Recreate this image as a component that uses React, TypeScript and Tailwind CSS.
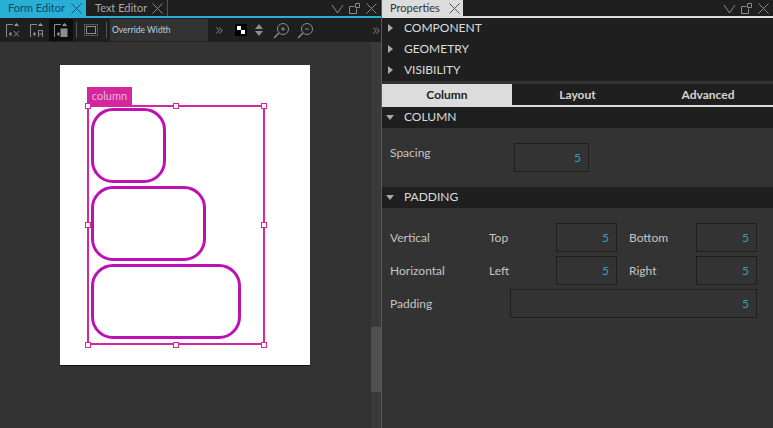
import type { ReactNode } from "react";

function WinButtons() {
  return (
    <svg width="50" height="14" viewBox="0 0 50 14" fill="none" stroke="#8a8a8a" strokeWidth="1">
      <path d="M2 4l5.500 8 5.500-8" />
      <path d="M24.500 5.500h-5v7h7v-5M25.500 2.500h4v4h-4z" />
      <path d="M36.500 2.500l10 10M46.500 2.500l-10 10" />
    </svg>
  );
}

function CloseX({ color = "#8a8a8a" }: { color?: string }) {
  return (
    <svg width="11" height="11" viewBox="0 0 11 11" fill="none" stroke={color} strokeWidth="1">
      <path d="M0.500 0.500l10 10M10.500 0.500l-10 10" />
    </svg>
  );
}

function Handle({ className }: { className: string }) {
  return <div className={`absolute h-[6px] w-[6px] border border-[#d6269e] bg-white ${className}`} />;
}

function Box({ className }: { className: string }) {
  return <div className={`h-[75px] rounded-[22px] border-[3px] border-[#bd10b5] bg-white ${className}`} />;
}

function Section({ title, open }: { title: string; open?: boolean }) {
  return (
    <div className="flex h-[21px] items-center bg-[#1f1f1f] pb-[1px]">
      {open ? (
        <svg width="8" height="5" viewBox="0 0 8 5" className="ml-[4px]">
          <path d="M0 0h8L4 5z" fill="#aaa" />
        </svg>
      ) : (
        <svg width="5" height="8" viewBox="0 0 5 8" className="ml-[6px]">
          <path d="M0 0l5 4-5 4z" fill="#aaa" />
        </svg>
      )}
      <span className={`text-[12px] text-[#dcdcdc] ${open ? "ml-[10px]" : "ml-[11px]"}`}>{title}</span>
    </div>
  );
}

function Value({ className, children }: { className: string; children: ReactNode }) {
  return (
    <div
      className={`flex h-[29px] shrink-0 items-center justify-end border border-[#1e1e1e] pr-[7px] text-[12px] text-[#2aa3bd] ${className}`}
    >
      {children}
    </div>
  );
}

function ToolIcon({ variant, active }: { variant: "x" | "a" | "box"; active?: boolean }) {
  return (
    <div className={`flex h-[22px] w-[24px] items-center justify-center ${active ? "bg-[#0d0d0d]" : ""}`}>
      <svg width="14" height="14" viewBox="0 0 14 14" fill="none" stroke="#8c8c8c">
        <path d="M0.500 14V1.500H7" />
        <path d="M8.500 2.500l2-2 2 2z" fill="#8c8c8c" />
        <path d="M5 9.500l-2 1.500 2 1.500z" fill="#8c8c8c" />
        {variant === "x" && <path d="M8 8l5 5.500M13 8l-5 5.500" />}
        {variant === "a" && <path d="M8.500 14V7.500h4V14M8.500 11h4" />}
        {variant === "box" && <rect x="7" y="6" width="6" height="8" fill="#8c8c8c" />}
      </svg>
    </div>
  );
}

export default function App() {
  return (
    <div className="flex h-[428px] w-[773px] overflow-hidden bg-[#333333] text-[12px] [font-family:Lato,sans-serif]">
      {/* Form editor side */}
      <div className="flex w-[381px] shrink-0 flex-col">
        <div className="flex h-[16px] bg-[#1f1f1f]">
          <div className="flex w-[86px] items-center justify-between bg-[#29aed6] pl-[8px] pr-[4px] text-[11px] text-[#0f4a66]">
            <span>Form Editor</span>
            <CloseX color="#15506b" />
          </div>
          <div className="ml-[1px] flex w-[81px] items-center justify-between border-r border-[#555] pl-[8px] pr-[4px] text-[11px] text-[#a8a8a8]">
            <span>Text Editor</span>
            <CloseX />
          </div>
          <div className="ml-auto mr-px flex items-center">
            <WinButtons />
          </div>
        </div>
        <div className="h-[2px] bg-[#29aed6]" />
        <div className="flex h-[24px] items-center bg-[#1f1f1f] pl-[1px]">
          <ToolIcon variant="x" />
          <ToolIcon variant="a" />
          <ToolIcon variant="box" active />
          <div className="ml-[3px] h-[16px] w-px bg-[#555]" />
          <svg width="14" height="12" viewBox="0 0 14 12" fill="none" stroke="#8c8c8c" className="ml-[7px]">
            <rect x="2.500" y="2.500" width="9" height="7" />
            <rect x="0.500" y="0.500" width="13" height="11" strokeDasharray="1 1" />
          </svg>
          <div className="ml-[8px] h-[16px] w-px bg-[#555]" />
          <div className="ml-[3px] flex h-[22px] w-[98px] items-center bg-[#333333] pl-[2px] text-[8.5px] text-[#b9d2e2]">
            Override Width
          </div>
          <svg width="7" height="7" viewBox="0 0 7 7" fill="none" stroke="#8c8c8c" className="ml-[8px]">
            <path d="M0.500 0.500l2.500 3-2.500 3M3.500 0.500l2.500 3-2.500 3" />
          </svg>
          <svg width="12" height="12" viewBox="0 0 12 12" className="ml-[12px]">
            <rect width="12" height="12" fill="#000" />
            <path d="M2 2h4v4H2zM6 6h4v4H6z" fill="#fff" />
          </svg>
          <svg width="8" height="12" viewBox="0 0 8 12" className="ml-[8px]">
            <path d="M4 0l4 5H0zM0 7h8l-4 5z" fill="#8c8c8c" />
          </svg>
          <svg width="17" height="17" viewBox="0 0 17 17" fill="none" stroke="#8c8c8c" className="ml-[10px]">
            <circle cx="10" cy="7" r="5.500" />
            <path d="M6 11l-5 5" strokeWidth="1.500" />
            <path d="M8 7h4M10 5v4" />
          </svg>
          <svg width="17" height="17" viewBox="0 0 17 17" fill="none" stroke="#8c8c8c" className="ml-[7px]">
            <circle cx="10" cy="7" r="5.500" />
            <path d="M6 11l-5 5" strokeWidth="1.500" />
            <path d="M8 7h4" />
          </svg>
          <svg width="7" height="7" viewBox="0 0 7 7" fill="none" stroke="#8c8c8c" className="ml-auto mr-[1px]">
            <path d="M0.500 0.500l2.500 3-2.500 3M3.500 0.500l2.500 3-2.500 3" />
          </svg>
        </div>
        <div className="flex min-h-0 flex-1">
          <div className="flex-1 pl-[60px] pt-[23px]">
            <div className="relative h-[300px] w-[250px] bg-white shadow-[0_1px_0_#111]">
              {/* selected column overlay */}
              <div className="absolute left-[27px] top-[22px] flex h-[19px] w-[45px] items-center justify-center bg-[#d6269e] text-[11px] text-[#eeb0dc]">
                column
              </div>
              <div className="absolute left-[27px] top-[40px] flex h-[240px] w-[178px] flex-col gap-[3px] border-2 border-[#d6269e] p-[2px] pt-[1px]">
                <Box className="w-[75px]" />
                <Box className="w-[115px]" />
                <Box className="w-[150px]" />
              </div>
              <Handle className="left-[25px] top-[38px]" />
              <Handle className="left-[113px] top-[38px]" />
              <Handle className="left-[201px] top-[38px]" />
              <Handle className="left-[25px] top-[157px]" />
              <Handle className="left-[201px] top-[157px]" />
              <Handle className="left-[25px] top-[277px]" />
              <Handle className="left-[113px] top-[277px]" />
              <Handle className="left-[201px] top-[277px]" />
            </div>
          </div>
          <div className="flex w-[10px] flex-col bg-[#3a3a3a]">
            <div className="mt-[285px] h-[65px] bg-[#505050]" />
          </div>
        </div>
      </div>
      <div className="w-px shrink-0 bg-[#5a5a5a]" />

      {/* Properties side */}
      <div className="flex w-[391px] shrink-0 flex-col">
        <div className="flex h-[16px] bg-[#1f1f1f]">
          <div className="flex w-[81px] items-center justify-between bg-[#dcdcdc] pl-[8px] pr-[3px] text-[11px] text-[#333]">
            <span>Properties</span>
            <CloseX color="#555" />
          </div>
          <div className="ml-auto mr-px flex items-center">
            <WinButtons />
          </div>
        </div>
        <div className="h-[2px] bg-[#dcdcdc]" />
        <Section title="COMPONENT" />
        <Section title="GEOMETRY" />
        <Section title="VISIBILITY" />
        <div className="h-[3px] bg-[#333333]" />
        <div className="flex h-[21px] bg-[#1f1f1f] text-[12px] font-bold text-[#d4d4d4]">
          <div className="flex w-[130px] items-center justify-center bg-[#dcdcdc] text-[#222]">Column</div>
          <div className="flex w-[131px] items-center justify-center">Layout</div>
          <div className="flex w-[130px] items-center justify-center">Advanced</div>
        </div>
        <div className="h-[2px] bg-[#dcdcdc]" />
        <Section title="COLUMN" open />
        <div className="flex h-[59px] items-start pl-[8px] pt-[15px] text-[#c4c4c4]">
          <span className="mt-px w-[124px] leading-[18px]">Spacing</span>
          <Value className="w-[75px]">5</Value>
        </div>
        <Section title="PADDING" open />
        <div className="flex flex-col gap-[4px] pl-[8px] pr-[16px] pt-[15px] text-[#c4c4c4]">
          <div className="flex items-center">
            <span className="w-[99px]">Vertical</span>
            <span className="w-[67px]">Top</span>
            <Value className="w-[61px]">5</Value>
            <span className="ml-[12px] w-[67px]">Bottom</span>
            <Value className="w-[61px]">5</Value>
          </div>
          <div className="flex items-center">
            <span className="w-[99px]">Horizontal</span>
            <span className="w-[67px]">Left</span>
            <Value className="w-[61px]">5</Value>
            <span className="ml-[12px] w-[67px]">Right</span>
            <Value className="w-[61px]">5</Value>
          </div>
          <div className="flex items-center">
            <span className="w-[120px]">Padding</span>
            <Value className="w-[247px]">5</Value>
          </div>
        </div>
      </div>
    </div>
  );
}
